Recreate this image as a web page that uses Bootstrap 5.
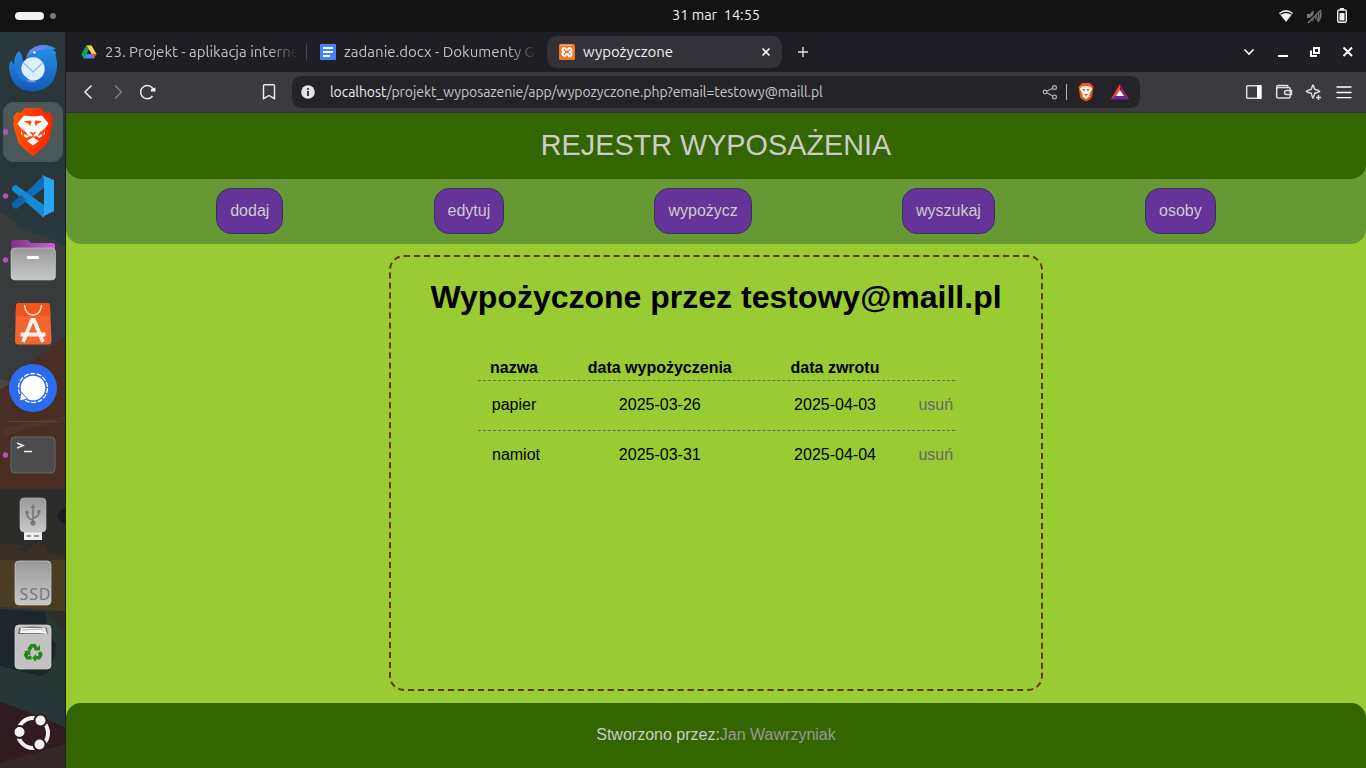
<!DOCTYPE html>
<html lang="pl">
<head>
<meta charset="utf-8">
<meta name="viewport" content="width=device-width, initial-scale=1">
<title>wypożyczone</title>
<link href="https://cdn.jsdelivr.net/npm/bootstrap@5.3.0/dist/css/bootstrap.min.css" rel="stylesheet">
<style>
  body { font-family: "Liberation Sans", Arial, sans-serif; font-size: 16px; line-height: 18px; color: #000; }
  svg { display: block; flex: none; }
  .ui { font-family: "Ubuntu Sans", "Noto Sans", sans-serif; white-space: nowrap; }
  .topbar { height: 32px; background: #131313; color: #f2f2f2; font-size: 14.500px; padding: 0 14px 0 15px; }
  .topbar > div { flex: 1 1 0; }
  .clock { margin-left: 65px; }
  .pill { width: 29px; height: 8px; border-radius: 4px; background: #f2f2f2; }
  .pip { width: 6px; height: 6px; border-radius: 3px; background: #7c7c7c; }
  .dock { width: 66px; background: #29363a; border-right: 1px solid #17201e; }
  .tabs { height: 40px; background: #1f1e24; color: #c1c1c4; font-size: 15px; }
  .tab-title { overflow: hidden; -webkit-mask-image: linear-gradient(90deg, #000 85%, transparent); mask-image: linear-gradient(90deg, #000 85%, transparent); }
  .tab-item { height: 32px; }
  .tab-open { width: 235px; background: #333238; border-radius: 10px; color: #f0f0f2; padding: 0 11px 0 12px; }
  .tools { height: 41px; background: #3b3a3f; border-bottom: 1px solid #333237; }
  .url { width: 848px; height: 32px; border-radius: 9px; background: #242328; color: #c6c6c9; font-size: 14px; padding: 0 11px 0 8px; }
  .addr { margin-left: 14px; padding-top: 1px; letter-spacing: -.06px; }
  .url b { font-weight: 400; color: #ececee; }
  .page { background: #9c3; }
  .top-wrap { background: #693; border-radius: 0 0 15px 15px; }
  .title-bar { height: 66px; background: #360; color: #ccc; border-radius: 0 0 15px 15px; font-size: 28.8px; line-height: 32px; padding-bottom: 2px; }
  .menu { height: 65px; padding-bottom: 1px; }
  .menu a { height: 46px; padding: 0 13px; border: 1px solid #336; border-radius: 15px; background: #639; color: #ccc; }
  .box { width: 654px; height: 436px; margin: 11px auto 12px; border: 2px dashed #630; border-radius: 15px; }
  .box h1 { font-size: 32px; line-height: 37px; font-weight: 700; margin: 22px 0 43px; }
  .loans { width: 477px; margin: 0 auto; }
  .loan { display: grid; grid-template-columns: 73px 218.500px 132px 1fr; justify-items: center; height: 50px; align-items: center; border-top: 1px dashed #666; padding-bottom: 1px; }
  .loan.head { height: 21px; border: 0; font-weight: 700; padding: 0; align-items: start; }
  .loan a { color: #666; }
  .foot { height: 65px; background: #360; color: #ccc; border-radius: 15px 15px 0 0; padding-bottom: 2px; }
  .foot a { color: #999; }
</style>
</head>
<body class="vh-100 overflow-hidden d-flex flex-column">
<div class="topbar ui d-flex align-items-center">
  <div class="d-flex align-items-center" style="gap:6px"><span class="pill"></span><span class="pip"></span></div>
  <div class="text-center" style="padding-bottom:2px"><span class="clock">31 mar&nbsp; 14:55</span></div>
  <div class="d-flex justify-content-end">
    <svg width="90" height="32" viewBox="1262 0 90 32">
      <path d="M1279 13q7-6 14 0l-7 9z" fill="#eee"/><path d="M1280.5 14.3q5.500-4 11 0" fill="none" stroke="#131313" stroke-width="1.200"/>
      <g fill="none" stroke="#777" stroke-width="1.400"><path d="M1307 14h3l3.500-4v12l-3.500-4h-3z" fill="#777" stroke="none"/><path d="M1315.500 14q1.500 2 0 5M1318 11.500q2 5-1 9M1320.500 10q1.500 7-2.500 12"/><path d="M1307 22.500l14-13" stroke="#131313" stroke-width="3"/><path d="M1308 23l13-13"/></g>
      <rect x="1337.700" y="10" width="8.600" height="12.300" rx="1.500" fill="none" stroke="#eee" stroke-width="1.400"/><path d="M1340 8h4v2h-4zM1339.500 13h5v7.500h-5z" fill="#eee"/>
    </svg>
  </div>
</div>
<div class="d-flex flex-grow-1">
  <aside class="dock flex-shrink-0">
    <svg width="65" height="736" viewBox="0 32 65 736">
      <defs>
        <linearGradient id="metal" x2="0" y2="1"><stop stop-color="#999"/><stop offset="1" stop-color="#c8c8c8"/></linearGradient>
        <linearGradient id="bird" x2="0" y2="1"><stop stop-color="#2695ec"/><stop offset="1" stop-color="#1258b3"/></linearGradient>
        <linearGradient id="lion" x2="1"><stop stop-color="#ff5500"/><stop offset="1" stop-color="#ff2000"/></linearGradient>
        <linearGradient id="fold" x2="1"><stop stop-color="#7d3282"/><stop offset="1" stop-color="#c566c9"/></linearGradient>
      </defs>
      <rect y="32" width="65" height="736" fill="#29373a"/>
      <path d="M0 225h20l45 20v100L0 400z" fill="#373b3b"/><path d="M0 212v14h20z" fill="#3b3b3b"/><path d="M12 225h53v19z" fill="#253a40"/>
      <path d="M0 385l65-48v152H0z" fill="#4a2e24"/><path d="M0 379l12 3-12 8z" fill="#494540"/><path d="M3 428q30-7 62-12v6q-30 3-60 14z" fill="#4f342b"/>
      <path d="M0 490q20-2 65-1v75H0z" fill="#2c2d2b"/><path d="M65 508q-10 6-7 11l7 5z" fill="#1b1b23"/>
      <path d="M0 545q15-3 25 1-10 3 0 6l12-9q12 2 10 10l18 3v14H0z" fill="#3a3026"/>
      <path d="M0 560h65v51L0 607z" fill="#4b3c22"/><path d="M0 609l46 3q2 20 10 32-2 30-16 32L0 668z" fill="#1d262c"/>
      <path d="M46 612l19-1v117L0 700v-34l40 10q16-2 16-32-9-10-10-32z" fill="#293733"/><path d="M46 612l19-1v22z" fill="#302e28"/><path d="M0 667l65 26v34L0 702z" fill="#293637"/>
      <path d="M0 701l65 26v41H0z" fill="#301b20"/><path d="M0 763l65-19v24H0z" fill="#332729"/>

      <g><!-- mail -->
        <path d="M9 68q0-6 3-8 0 4 2 4 0-9 5-13 3 2 4 10l3-2q2-12 14-14 9-1 16 4l-3 .5q3 2 3.500 5l-1.500-.5q2 4 2 13-2 23-24 24.500-22-1-24-23.500z" fill="url(#bird)"/>
        <path d="M26 57q5-11 15-11 8 0 13 3-9-2-14 1-7 1-14 7z" fill="#7b7ce4"/><path d="M27 57q5-5 12-5l-3 4-8 2z" fill="#2380dc"/>
        <circle cx="33" cy="69" r="11.700" fill="#deefff"/><path d="M23.500 63l9.500 9 9.500-9" fill="none" stroke="#8cbbe8" stroke-width="1.200"/>
        <path d="M20 64q0 9 7 14 5 4 11 4-12 3-19-5-5-7-3-13z" fill="#2478dc"/><path d="M29 79.500q4 2.500 9 2.500-7 1.500-11-2z" fill="#8e9df0"/><circle cx="34.500" cy="52.500" r="1.200" fill="#fff"/>
      </g>
      <rect x="3" y="102" width="60" height="60" rx="11" fill="#4c595b"/>
      <g><!-- browser -->
        <path d="M25 108h16l4 5 4-1 4 5-1 4 1 3-5 18q-2 4-15 14-13-10-15-14l-5-18 1-3-1-4 4-5 4 1z" fill="url(#lion)"/>
        <path d="M24 115.500l5 .8h8l5-.8 6.500 8-4 5.500.5 5-5.500 4-3.500-2-3 1-3-1-3.500 2-5.500-4 .5-5-4-5.500z" fill="#fff"/>
        <g fill="#ff4a08"><path d="M23.500 121.300l7.500-.8 .5 2-1.500 4-1-2.500zM42.500 121.300l-7.500-.8-.5 2 1.500 4 1-2.500z"/><path d="M20.500 128l5.500 4 2.500 4.500-4-2.500-1 3.500zM45.500 128l-5.500 4-2.500 4.500 4-2.500 1 3.500z"/><path d="M29 131.500l4 1.200 4-1.200-3.300 3.500v2.500h-1.400V135z"/></g>
        <path d="M27 141l6-3.800 6 3.800-6 4.500z" fill="#fff"/>
      </g>
      <g><!-- editor -->
        <path d="M12 206l4 3 28-21v-13z" fill="#0f6fb5"/><path d="M12 187l4-2 28 20v13L12 190z" fill="#168bd4"/><path d="M12 206q-1-2 1-4l8-7 5 5-10 8z" fill="#0d65a8"/><path d="M42 175l12 5v31l-12 6 2-3v-36z" fill="#27a7ef"/>
      </g>
      <g><!-- files -->
        <path d="M11 243q0-3 3-3h13q2 0 4 3h21q3 0 3 3v12H11z" fill="url(#fold)"/><rect x="11" y="248" width="44.500" height="32" rx="4" fill="url(#metal)" stroke="#ccc" stroke-width=".6"/><rect x="27" y="256" width="12" height="3" rx="1" fill="#fff"/>
      </g>
      <g><!-- app store -->
        <path d="M19 303h28q3 0 3 3l1.500 35q0 3.500-3.500 3.500H18q-3 0-3-3.500L16 306q0-3 3-3z" fill="#f26430"/><path d="M19 303h28q3 0 3 3l.4 10H15.600L16 306q0-3 3-3z" fill="#f3531c"/>
        <path d="M24.500 305q1 10 8.500 10t8.500-10" fill="none" stroke="#ffe6d9" stroke-width="1.500"/><path d="M23 342l9-22h2l9 22M20.500 334.500h25" fill="none" stroke="#fff1e8" stroke-width="3.800"/>
      </g>
      <g><!-- messenger -->
        <circle cx="33" cy="388" r="24" fill="#2c6bed"/><circle cx="33" cy="388" r="14.500" fill="none" stroke="#fff" stroke-width="1.300" stroke-dasharray="5 1.500"/><circle cx="33" cy="388" r="12.300" fill="#fff"/><path d="M21 392l-1.500 9 8-2z" fill="#fff" stroke="#2c6bed"/>
      </g>
      <path d="M9 421.500h48" stroke="#514b48"/>
      <rect x="11" y="437" width="44" height="36" rx="4" fill="#4c4c4c" stroke="#696969"/><path d="M17 443l6 2.500-6 2.500M24 451.500h8" fill="none" stroke="#eee" stroke-width="1.500"/>
      <g><!-- usb -->
        <path d="M24 531h18v9H24z" fill="#eee"/><path d="M26.500 536h4.500M34 536h5" stroke="#777" stroke-width="1.500"/><rect x="20" y="498" width="26" height="34" rx="4" fill="url(#metal)" stroke="#bbb" stroke-width=".6"/>
        <g fill="none" stroke="#777" stroke-width="1.700"><path d="M33 507v17M33 520q-6-1-6-7M33 518q6-1 6-6"/><path d="M33 504l2.500 4h-5zM25.500 511h3v3h-3zM37.500 510h3v3h-3z" fill="#777" stroke="none"/><circle cx="33" cy="523" r="1.700" fill="#777"/></g>
      </g>
      <rect x="15" y="561" width="36" height="44" rx="4" fill="url(#metal)" stroke="#ccc" stroke-width=".7"/>
      <text x="19.500" y="599.500" font-family="Noto Sans, sans-serif" font-size="16" fill="#777" textLength="31">SSD</text>
      <g><!-- trash -->
        <rect x="15" y="625" width="36" height="44" rx="4" fill="#c2c2c2" stroke="#ddd" stroke-width=".7"/><path d="M18 634l1-6q14-3 28 0l1 6z" fill="#777"/><path d="M20 633l1-5 24 0 2 6-7-1H21z" fill="#f5f5f5"/><path d="M22 630l20-1 3 3" fill="none" stroke="#999" stroke-width=".7"/>
        <g fill="none" stroke="#26851c" stroke-width="3.600"><path d="M29 650l2.500-4.300h3l2 3.300M39.500 652l1.300 2.500-1.800 3.200h-3.500M31.500 657.700h-4L25.700 655l1.500-2.500"/></g><path d="M34 650.500l6 0v-5.500zM36 654v8l-4-4zM24 651.500l6-1.500.5 6z" fill="#26851c"/>
      </g>
      <g><!-- launcher -->
        <circle cx="33" cy="733" r="15" fill="none" stroke="#f2f2f2" stroke-width="4"/><g fill="#f2f2f2" stroke="#301b20" stroke-width="2"><circle cx="19.500" cy="732" r="6"/><circle cx="40.500" cy="720.500" r="6"/><circle cx="39.500" cy="744.500" r="6"/></g>
      </g>
      <g fill="#b550b8"><circle cx="5.500" cy="132" r="2.700"/><circle cx="5.500" cy="196" r="2.700"/><circle cx="5.500" cy="260" r="2.700"/><circle cx="5.500" cy="455" r="2.700"/></g>
    </svg>
  </aside>

  <div class="flex-grow-1 d-flex flex-column">
    <div class="tabs ui d-flex align-items-center">
      <div class="tab-item d-flex align-items-center" style="width:240px;padding-left:15px">
        <svg width="16" height="16" viewBox="0 0 16 16"><path d="M5.500 1.500h5L13 6l-3 1-2-3-3 6H1L0.500 10z" fill="#1fa463"/><path d="M5.500 1.500h5l5 8.500h-5z" fill="#ffcf48"/><path d="M3 10h12.500L13 14.500H3L.5 10z" fill="#4688f4"/><path d="M5.500 1.500L8 5.500 3 14.500.5 10z" fill="#12a05c"/><path d="M11 10h4.500L13 14.500z" fill="#ea4335"/><path d="M8 6l2.300 4H5.700z" fill="#1f1e24"/></svg>
        <div class="tab-title" style="width:193px;margin-left:8px"><span>23. Projekt - aplikacja interne</span></div>
      </div>
      <div style="width:1px;height:16px;background:#45444a"></div>
      <div class="tab-item d-flex align-items-center" style="width:240px;padding-left:13px">
        <svg width="16" height="16" viewBox="0 0 16 16"><rect width="16" height="16" rx="1" fill="#4285f4"/><path d="M3 4h10M3 8h10M3 12h7" stroke="#fff" stroke-width="1.800"/></svg>
        <div class="tab-title" style="width:193px;margin-left:8px"><span>zadanie.docx - Dokumenty G</span></div>
      </div>
      <div class="tab-item tab-open d-flex align-items-center">
        <svg width="16" height="16" viewBox="0 0 16 16"><rect width="16" height="16" rx="1.500" fill="#f37623"/><path d="M1 1.300h12" stroke="#ffc49a" stroke-width=".8"/><path d="M6 8Q3.500 8 3.500 5.800T5.500 4q1 0 1.500 1.500h2Q9.500 4 10.500 4t2 1.800T10 8q2.500 0 2.500 2.300t-2 1.900q-1 0-1.500-2H7q-.5 2-1.500 2t-2-1.900T6 8z" fill="none" stroke="#fff" stroke-width="1.900"/></svg>
        <span class="flex-grow-1" style="margin-left:8px">wypożyczone</span>
        <svg width="10" height="10" viewBox="0 0 10 10"><path d="M1.500 1.500l7 7m0-7l-7 7" stroke="#fff" stroke-width="1.700"/></svg>
      </div>
      <svg style="margin-left:16px" width="10" height="10" viewBox="0 0 10 10"><path d="M5 0v10M0 5h10" stroke="#ddd" stroke-width="1.400"/></svg>
      <svg class="ms-auto" width="126" height="40" viewBox="1240 32 126 40" fill="none" stroke="#fff" stroke-width="2"><path d="M1244.500 49.500l4.500 4.500 4.500-4.500" stroke-width="1.700"/><path d="M1278 56h10M1314 48h5v5h-5zM1311 50.500V56h6M1343.500 47.500l8.500 8.500m0-8.500l-8.500 8.500"/></svg>
    </div>
    <div class="tools ui d-flex align-items-center">
      <svg width="226" height="40" viewBox="66 72 226 40" fill="none" stroke="#eee" stroke-width="1.500"><path d="M91.500 85.500L85 92l6.500 6.500"/><path d="M115 85.500l6.500 6.500-6.500 6.500" stroke="#818085"/><path d="M153.500 90a6.600 6.600 0 1 0-1 6"/><path d="M151 91.500v-2.500l4.500-1.500v4z" fill="#eee" stroke="none"/><path d="M264.500 84.700h9q1 0 1 1v13l-5.500-3.200-5.500 3.200v-13q0-1 1-1z" stroke-width="1.400"/></svg>
      <div class="url d-flex align-items-center">
        <svg width="16" height="16" viewBox="0 0 16 16"><circle cx="8" cy="8" r="6.800" fill="#e4e3e8"/><path d="M8 7v5M8 4v1.800" stroke="#29282d" stroke-width="1.800"/></svg>
        <span class="flex-grow-1 addr"><b>localhost</b>/projekt_wyposazenie/app/wypozyczone.php?email=testowy@maill.pl</span>
        <svg width="90" height="32" viewBox="1039 76 90 32"><g fill="none" stroke="#b5b5b8" stroke-width="1.200"><circle cx="1045" cy="92" r="1.800"/><circle cx="1054.500" cy="87.500" r="1.900"/><circle cx="1054.500" cy="97" r="1.900"/><path d="M1047 91l5.500-2.500M1047 93l5.500 2.800"/></g><path d="M1066.500 84v16" stroke="#b5b5b8"/>
          <path d="M1082 83h8l3.500 4-1.500 10q-1 2-6 4.500-5-2.500-6-4.500l-1.500-10z" fill="#ff5014"/><path d="M1081 87l3-1h4l3 1 1 2-3 6 1 1-4 3-4-3 1-1-3-6z" fill="#fff"/><path d="M1082 89.200l3.300-.2-.8 2.500zM1090 89.200l-3.300-.2.8 2.500zM1084 94.500l2-1 2 1-2 1.500z" fill="#ff5014"/>
          <path d="M1120 84l-9 15h9z" fill="#ff4724"/><path d="M1120 84l9 15h-7z" fill="#9e1f63"/><path d="M1111 99.500h18l-4-4h-10z" fill="#662d91"/><path d="M1120 90l4 6h-8z" fill="#fff"/></svg>
      </div>
      <svg class="ms-auto" width="126" height="40" viewBox="1240 72 126 40" fill="none" stroke="#ddd" stroke-width="1.500"><rect x="1246.700" y="85.700" width="14" height="12.600" rx="1"/><path d="M1257 85h4.500v14h-4.500z" fill="#fff" stroke="none"/><rect x="1276.700" y="87.500" width="13.500" height="10.500" rx="1.500"/><path d="M1276.700 89v-2q0-1.500 1.500-1.500h9.500v2M1291.500 90.500h-5a2 2 0 0 0 0 4h5z"/><path d="M1313 85q1 1.500 1.700 4.300 3 .8 5 2-2 1.200-5 2-.7 2.800-1.700 5-1-2.200-1.700-5-3-.8-5-2 2-1.200 5-2 .7-2.800 1.700-4.300zM1318.500 95v5M1316 97.500h5" stroke-width="1.400" stroke-linejoin="round"/><path d="M1336.500 87h15M1336.500 92.500h15M1336.500 97.700h15" stroke="#fff" stroke-width="1.300"/></svg>
    </div>

    <main class="page flex-grow-1">
      <div class="top-wrap">
        <header class="title-bar d-flex align-items-center justify-content-center">REJESTR WYPOSAŻENIA</header>
        <nav class="menu d-flex align-items-center justify-content-evenly">
          <a class="d-flex align-items-center text-decoration-none" href="#">dodaj</a>
          <a class="d-flex align-items-center text-decoration-none" href="#">edytuj</a>
          <a class="d-flex align-items-center text-decoration-none" href="#">wypożycz</a>
          <a class="d-flex align-items-center text-decoration-none" href="#">wyszukaj</a>
          <a class="d-flex align-items-center text-decoration-none" href="#">osoby</a>
        </nav>
      </div>
      <section class="box">
        <h1 class="text-center">Wypożyczone przez testowy@maill.pl</h1>
        <div class="loans">
          <div class="loan head"><span>nazwa</span><span>data wypożyczenia</span><span>data zwrotu</span><span></span></div>
          <div class="loan"><span>papier</span><span>2025-03-26</span><span>2025-04-03</span><a class="text-decoration-none ms-3" href="#">usuń</a></div>
          <div class="loan"><span class="ps-1">namiot</span><span>2025-03-31</span><span>2025-04-04</span><a class="text-decoration-none ms-3" href="#">usuń</a></div>
        </div>
      </section>
      <footer class="foot d-flex align-items-center justify-content-center">Stworzono przez:<a class="text-decoration-none" href="#">Jan Wawrzyniak</a></footer>
    </main>
  </div>
</div>
<script src="https://cdn.jsdelivr.net/npm/bootstrap@5.3.0/dist/js/bootstrap.bundle.min.js"></script>
</body>
</html>
